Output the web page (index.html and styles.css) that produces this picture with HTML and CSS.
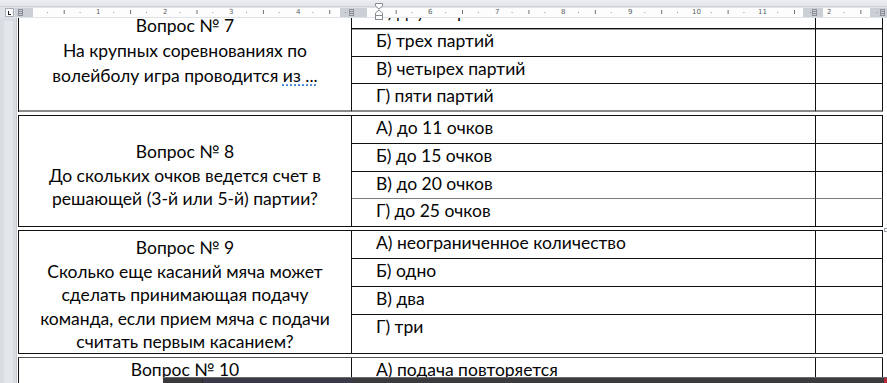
FILE: index.html
```html
<!DOCTYPE html>
<html lang="ru">
<head>
<meta charset="utf-8">
<title>Вопросы по волейболу</title>
<link rel="stylesheet" href="styles.css">
</head>
<body>
<div class="app">
  <div class="topstrip"></div>
  <div class="rulerbar">
    <div class="tabsel"><span class="tab-l"></span></div>
    <div class="ruler">
      <div class="seg gray" style="width:18px"><span class="grip"></span></div>
      <div class="seg white" style="width:307px"></div>
      <div class="seg gray" style="width:27px"><span class="grip grip-mid"></span></div>
      <div class="seg white" style="width:436px"></div>
      <div class="seg gray" style="width:20px"><span class="grip grip-mid"></span></div>
      <div class="seg white" style="width:47px"></div>
      <div class="seg gray grow"><span class="grip grip-end"></span></div>
      <div class="ticks"></div>
      <span class="num" style="left:81px">1</span>
      <span class="num" style="left:148px">2</span>
      <span class="num" style="left:214px">3</span>
      <span class="num" style="left:281px">4</span>
      <span class="num" style="left:413px">6</span>
      <span class="num" style="left:480px">7</span>
      <span class="num" style="left:546px">8</span>
      <span class="num" style="left:613px">9</span>
      <span class="num" style="left:677px">10</span>
      <span class="num" style="left:743px">11</span>
      <span class="num" style="left:812px">2</span>
    </div>
  </div>
  <svg class="indent-marker" width="8" height="17" viewBox="0 0 8 17">
    <path d="M0.5 0.5 H7.5 V3 L4 6 L0.5 3 Z" fill="#fff" stroke="#858b93"/>
    <path d="M4 7 L7.5 10 V12.5 H0.5 V10 Z" fill="#fff" stroke="#858b93"/>
    <rect x="0.5" y="12.5" width="7" height="4" fill="#fff" stroke="#858b93"/>
  </svg>
  <div class="main">
    <div class="vruler"><div class="vruler-band"></div></div>
    <div class="page">
      <div class="doc">
        <div class="qtable t1">
          <div class="qcell q1">
            <p>Вопрос № 7</p>
            <p>На крупных соревнованиях по<br>волейболу игра проводится <span class="spell">из ...</span></p>
          </div>
          <div class="opt opt-first">А) двух партий</div><div class="blank"></div>
          <div class="opt soft-top">Б) трех партий</div><div class="blank soft-top"></div>
          <div class="opt">В) четырех партий</div><div class="blank"></div>
          <div class="opt last">Г) пяти партий</div><div class="blank last"></div>
        </div>
        <div class="qtable t2">
          <div class="qcell q2">
            <p>Вопрос № 8</p>
            <p>До скольких очков ведется счет в<br>решающей (3-й или 5-й) партии?</p>
          </div>
          <div class="opt">А) до 11 очков</div><div class="blank"></div>
          <div class="opt">Б) до 15 очков</div><div class="blank"></div>
          <div class="opt soft">В) до 20 очков</div><div class="blank soft"></div>
          <div class="opt last">Г) до 25 очков</div><div class="blank last"></div>
        </div>
        <div class="qtable t3">
          <span class="move-handle"></span>
          <div class="qcell q3">
            <p>Вопрос № 9</p>
            <p>Сколько еще касаний мяча может<br>сделать принимающая подачу<br>команда, если прием мяча с подачи<br>считать первым касанием?</p>
          </div>
          <div class="opt">А) неограниченное количество</div><div class="blank"></div>
          <div class="opt">Б) одно</div><div class="blank"></div>
          <div class="opt">В) два</div><div class="blank"></div>
          <div class="opt last">Г) три</div><div class="blank last"></div>
        </div>
        <div class="qtable t4">
          <div class="qcell q4">
            <p>Вопрос № 10</p>
            <p>Что происходит, если при подаче<br>мяч коснулся сетки и перелетел<br>на сторону соперника?</p>
          </div>
          <div class="opt">А) подача повторяется</div><div class="blank"></div>
          <div class="opt">Б) игра продолжается</div><div class="blank"></div>
          <div class="opt">В) переход подачи</div><div class="blank"></div>
          <div class="opt last">Г) очко сопернику</div><div class="blank last"></div>
        </div>
      </div>
    </div>
  </div>
  <div class="taskbar">
    <span class="tb-seg tb-a"></span>
    <span class="tb-seg tb-b"></span>
    <span class="tb-seg tb-c"></span>
    <span class="tb-close"></span>
  </div>
</div>
</body>
</html>
```
FILE: styles.css
```css
* { box-sizing: border-box; }
html, body { margin: 0; padding: 0; }
body { background: #fff; font-family: "Lato", "Liberation Sans", sans-serif; }

.app {
  width: 887px;
  height: 383px;
  position: relative;
  overflow: hidden;
  background: #dfe3e8;
  display: flex;
  flex-direction: column;
}

.topstrip {
  height: 7px;
  flex: none;
  background: linear-gradient(#eceef1, #e1e4e8);
  border-bottom: 1px solid #cfd4da;
}

.rulerbar {
  height: 11px;
  flex: none;
  display: flex;
  align-items: flex-start;
  padding-left: 5px;
  background: #dfe3e8;
}

.tabsel {
  width: 9px;
  height: 9px;
  margin-top: 1px;
  background: #fbfbfc;
  border: 1px solid #a8afb8;
  position: relative;
  flex: none;
}
.tab-l {
  position: absolute;
  left: 2px;
  top: 2px;
  width: 3px;
  height: 4px;
  border-left: 1px solid #222;
  border-bottom: 1px solid #222;
}

.ruler {
  position: relative;
  display: flex;
  flex: 1;
  height: 9px;
  margin-top: 1px;
  margin-left: 1px;
}
.seg { height: 100%; position: relative; flex: none; }
.seg.white { background: #fdfdfd; }
.seg.gray { background: #cbd0d7; }
.seg.grow { flex: 1; }

.grip {
  position: absolute;
  top: 1px;
  left: 3px;
  width: 5px;
  height: 7px;
  border-left: 1px solid #8c9199;
  border-right: 1px solid #8c9199;
  background: repeating-linear-gradient(#8c9199 0 1px, transparent 1px 2px);
}
.grip-mid { left: 9px; }
.grip-end { left: 10px; }

.ticks {
  position: absolute;
  left: -16px;
  top: 0;
  right: 0;
  bottom: 0;
  pointer-events: none;
  background-image:
    linear-gradient(to right, transparent 16px, #8d9198 16px, #8d9198 17px, transparent 17px, transparent 49px, #8d9198 49px, #8d9198 50px, transparent 50px),
    linear-gradient(to right, transparent 33px, #6d7178 33px, #6d7178 34px, transparent 34px);
  background-size: 66.4px 1px, 66.4px 4px;
  background-position: 32px 4px, 32px 2px;
  background-repeat: repeat-x;
}

.num {
  position: absolute;
  top: 0;
  font-family: "DejaVu Sans", sans-serif;
  font-size: 7px;
  line-height: 9px;
  color: #5a5f66;
}

.indent-marker {
  position: absolute;
  left: 375px;
  top: 3px;
}

.main {
  flex: 1;
  display: flex;
  min-height: 0;
}

.vruler {
  width: 17px;
  flex: none;
  background: #d9dde2;
  border-right: 1px solid #c4c9cf;
  padding: 3px 3px 0 4px;
}
.vruler-band {
  height: 100%;
  background: #e3e6ea;
}

.page {
  flex: 1;
  background: #fff;
  overflow: hidden;
  padding-left: 1px;
}

.doc {
  margin-top: -20px;
  display: flex;
  flex-direction: column;
  gap: 3px;
}

.qtable {
  position: relative;
  width: 865px;
  display: grid;
  grid-template-columns: 333px 464px 67px;
  grid-template-rows: 28px 28px 27px 28px;
  border-top: 1px solid #111;
  border-left: 1px solid #111;
  color: #050505;
  font-size: 17.5px;
}
.t1 { grid-template-rows: 30px 28px 27px 28px; }
.t3 { grid-template-rows: 28px 28px 28px 39px; }
.t4 { border-top-color: #555; }

.qcell {
  grid-row: 1 / span 4;
  grid-column: 1;
  border-right: 1px solid #111;
  border-bottom: 1px solid #111;
  display: flex;
  flex-direction: column;
  justify-content: flex-start;
  align-items: center;
  text-align: center;
  padding: 0 4px;
  line-height: 24px;
}
.qcell p { margin: 0; }
.q1 { padding-top: 14px; line-height: 25px; border-bottom: 2px solid #8a8a8a; }
.q2 { padding-top: 24px; line-height: 23.5px; }
.q3 { padding-top: 5px; line-height: 23.5px; }
.q4 { padding-top: 0; }

.opt {
  grid-column: 2;
  border-right: 1px solid #111;
  border-bottom: 1px solid #111;
  padding-left: 24px;
  line-height: 24px;
  white-space: nowrap;
}
.opt-first { padding-top: 1px; }
.blank {
  grid-column: 3;
  border-right: 1px solid #111;
  border-bottom: 1px solid #111;
}
.soft { border-bottom-color: #7d7d7d; }
.soft-top { box-shadow: inset 0 1px 0 #9a9a9a; }
.t1 .last { border-bottom: 2px solid #8a8a8a; }

.spell {
  text-decoration: underline dotted #3a7fd0;
  text-underline-offset: 3px;
}

.move-handle {
  position: absolute;
  right: -5px;
  top: -3px;
  width: 4px;
  height: 4px;
  border: 1px solid #9aa0a8;
  background: #fff;
}

.taskbar {
  position: absolute;
  left: 163px;
  right: 0;
  bottom: 0;
  height: 6px;
  display: flex;
  background: #3c3c3e;
  border-top: 1px solid #6b6b6e;
}
.tb-seg { height: 100%; }
.tb-a { width: 40px; background: #3a3a3d; border-right: 1px solid #2a2a2c; }
.tb-b { width: 150px; background: #3b3a48; }
.tb-c { flex: 1; background: #3c3c3e; }
.tb-close { width: 3px; background: #b8263b; }
```
